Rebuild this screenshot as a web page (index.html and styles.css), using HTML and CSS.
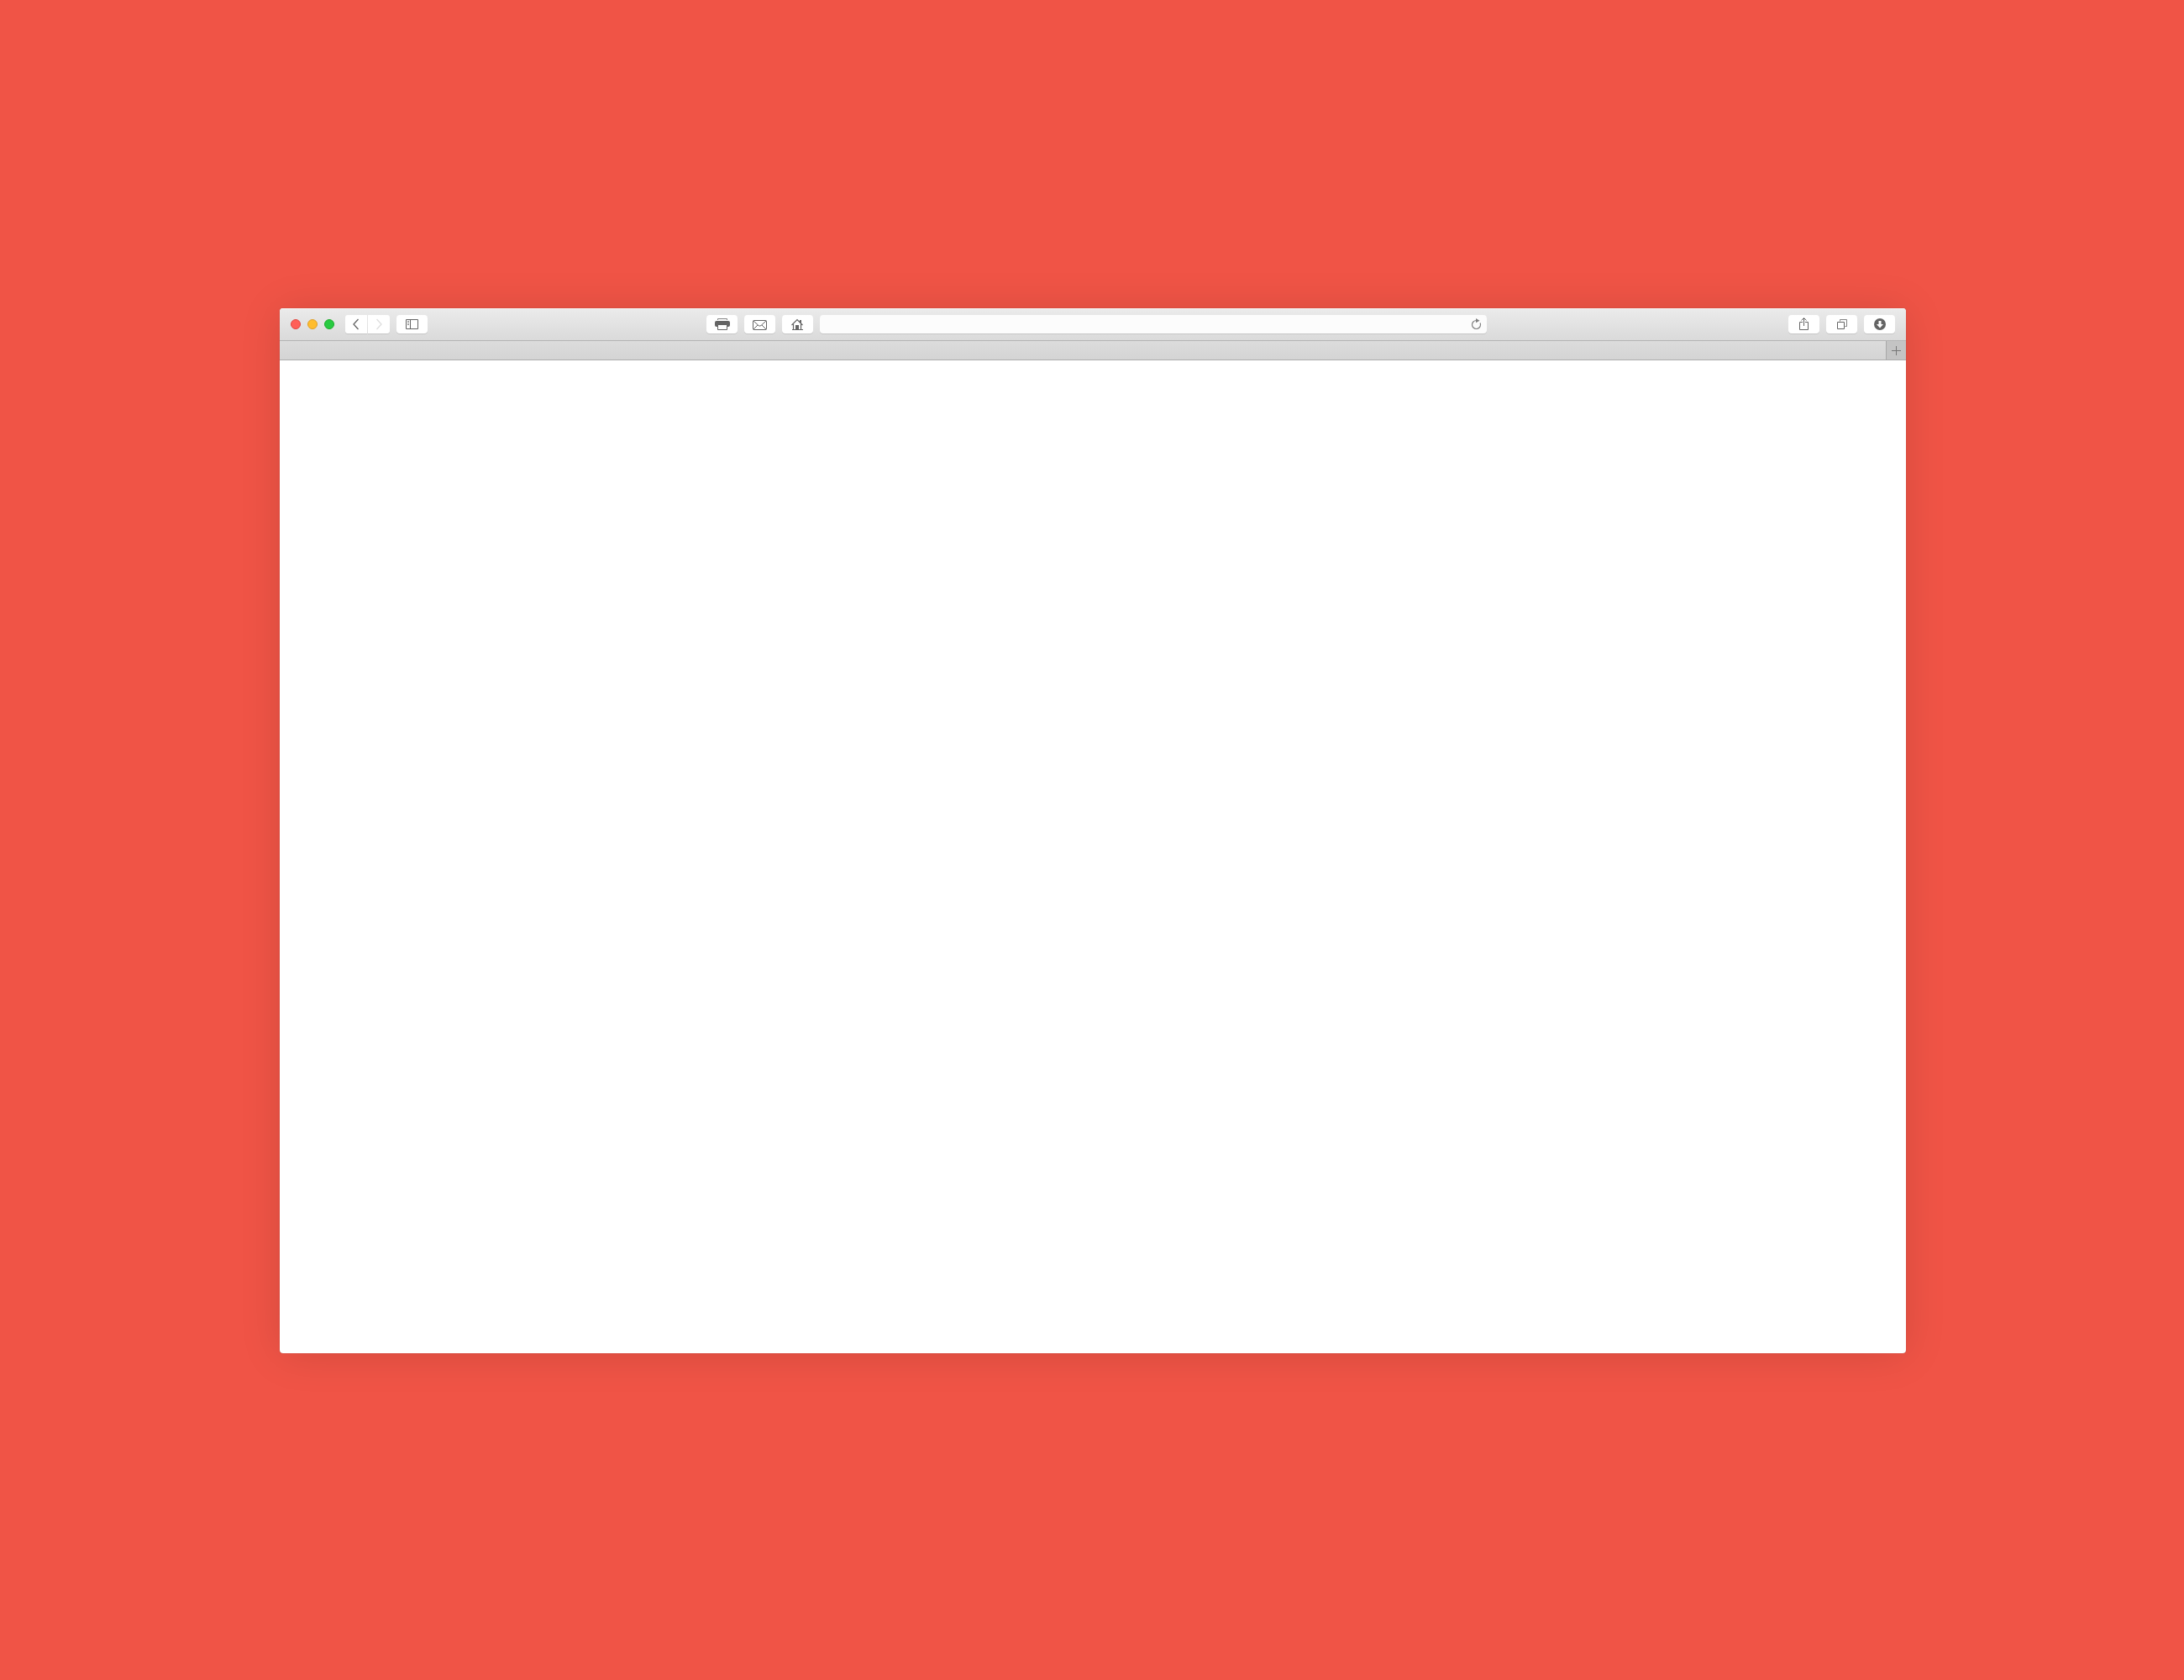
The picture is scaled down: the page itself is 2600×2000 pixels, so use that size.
FILE: index.html
```html
<!DOCTYPE html>
<html lang="en">
<head>
<meta charset="utf-8">
<meta name="viewport" content="width=device-width, initial-scale=1">
<title>Browser window</title>
<link rel="stylesheet" href="styles.css">
</head>
<body>
<main class="window">
  <header class="toolbar">
    <div class="group">
      <div class="lights">
        <button class="light light-close" aria-label="Close"></button>
        <button class="light light-minimize" aria-label="Minimize"></button>
        <button class="light light-zoom" aria-label="Zoom"></button>
      </div>
      <nav class="history">
        <button class="button button-back" aria-label="Back"><svg class="icon" width="26" height="22"><path d="M15.500 5L10 11l5.500 6" stroke-width="1.300"/></svg></button>
        <button class="button button-forward" aria-label="Forward" disabled><svg class="icon" width="26" height="22"><path d="M10.500 5L16 11l-5.500 6" stroke-width="1.300"/></svg></button>
      </nav>
      <button class="button" aria-label="Sidebar"><svg class="icon" width="37" height="22"><path d="M11.500 5.500h14v11h-14zM16.500 5.500v11"/><path d="M13 7.500h2M13 9.500h2M13 11.500h2" opacity=".8"/></svg></button>
    </div>
    <div class="group">
      <button class="button" aria-label="Print"><svg class="icon" width="37" height="22"><path d="M13.500 6V4.500h11V6" opacity=".8"/><path class="solid" d="M12 7h14q2 0 2 2v3q0 2-2 2H12q-2 0-2-2V9q0-2 2-2z"/><path class="paper" d="M13.500 11.500h11v6h-11z"/></svg></button>
      <button class="button" aria-label="Mail"><svg class="icon" width="37" height="22"><rect x="10.500" y="6.500" width="16" height="11" rx="1"/><path d="M11 7l6 5.500q1.500 1.300 3 0L26 7M11 17l5-5M26 17l-5-5"/></svg></button>
      <button class="button" aria-label="Home"><svg class="icon" width="37" height="22"><path d="M11.500 12L18 5.500l6.500 6.500M13.500 11v6.500M22.500 11v6.500M12 17.500h13" stroke-width="1.200"/><path class="solid" d="M21 6h2v4.500l-2-2zM16 12h4v6h-4z"/></svg></button>
      <div class="address">
        <input class="address-input" type="text" aria-label="Address">
        <button class="reload" aria-label="Reload"><svg class="icon" width="24" height="22"><path d="M11.500 6.500a5 5 0 1 0 5 5q0-1-.4-2" stroke-width="1.200"/><path class="solid" d="M11 4l4.500 2.700L11 9.200z"/></svg></button>
      </div>
    </div>
    <div class="group group-end">
      <button class="button" aria-label="Share"><svg class="icon" width="37" height="22"><path d="M17 8.500h-3.500v9h10v-9H20M18.500 13V4M15.500 6.500l3-3 3 3"/></svg></button>
      <button class="button" aria-label="Show all tabs"><svg class="icon" width="37" height="22"><path d="M13.500 8.500h8v8h-8z"/><path d="M16.500 7.500v-2h8v8h-2" opacity=".8"/></svg></button>
      <button class="button" aria-label="Downloads"><svg class="icon" width="37" height="22"><circle class="solid" cx="19" cy="11" r="7"/><path class="cutout" d="M17.500 7h3v4h2.500l-4 4.500-4-4.500h2.500z"/></svg></button>
    </div>
  </header>
  <div class="tabbar">
    <button class="new-tab" aria-label="New tab"><svg class="icon" width="23" height="22"><path d="M6 11.500h11M11.500 6v11"/></svg></button>
  </div>
  <section class="page" aria-label="Page"></section>
</main>
</body>
</html>
```
FILE: styles.css
```css
* {
  box-sizing: border-box;
}

body {
  display: flex;
  min-height: 100vh;
  margin: 0;
  padding: 367px 331px 389px 333px;
  background: #f05446;
  font-family: "Liberation Sans", sans-serif;
}

button {
  padding: 0;
  border: 0;
}

.window {
  display: flex;
  flex: 1;
  flex-direction: column;
  overflow: hidden;
  border-radius: 4px;
  background: #fff;
  box-shadow: 0 0 1px rgba(0, 0, 0, 0.4), 0 2px 50px rgba(0, 0, 0, 0.12);
}

.toolbar {
  display: grid;
  grid-template-columns: 495fr 929fr 486fr;
  align-items: center;
  height: 39px;
  padding: 0 13px;
  border-bottom: 1px solid #b4b4b4;
  background: linear-gradient(#ebebeb, #dadada);
  box-shadow: inset 0 1px #f6f6f6;
}

.group {
  display: flex;
  align-items: center;
  gap: 8px;
}

.group-end {
  justify-content: flex-end;
}

.lights {
  display: flex;
  gap: 8px;
  margin-right: 5px;
}

.light {
  width: 12px;
  height: 12px;
  border: 1px solid;
  border-radius: 50%;
}

.light-close {
  border-color: #e2463f;
  background: #ff5f57;
}

.light-minimize {
  border-color: #e0a028;
  background: #ffbd2e;
}

.light-zoom {
  border-color: #1dad2b;
  background: #28ca41;
}

.history {
  display: flex;
  gap: 1px;
}

.button {
  width: 37px;
  height: 22px;
  border-radius: 4px;
  background: #fff;
  box-shadow: 0 1px #c6c6c6;
  color: #646464;
}

.button-back,
.button-forward {
  width: 26px;
}

.button-back {
  border-radius: 3px 0 0 3px;
}

.button-forward {
  border-radius: 0 3px 3px 0;
  color: #dedede;
}

.icon {
  display: block;
  fill: none;
  stroke: currentColor;
}

.solid {
  fill: currentColor;
  stroke: none;
}

.paper {
  fill: #fff;
}

.cutout {
  fill: #fff;
  stroke: none;
}

.address {
  display: flex;
  flex: 1;
  height: 22px;
  border-radius: 4px;
  background: #fcfcfc;
  box-shadow: 0 1px #c6c6c6;
}

.address-input {
  flex: 1;
  min-width: 0;
  padding: 0 8px;
  border: 0;
  background: none;
  font: inherit;
  font-size: 13px;
  outline: none;
}

.reload {
  width: 24px;
  background: none;
  color: #808080;
}

.tabbar {
  display: flex;
  justify-content: flex-end;
  height: 23px;
  border-bottom: 1px solid #acacac;
  background: linear-gradient(#dcdcdc, #d4d4d4);
}

.new-tab {
  width: 24px;
  border-left: 1px solid #a9a9a9;
  background: #c4c4c4;
  color: #777;
}

.page {
  flex: 1;
}
```
